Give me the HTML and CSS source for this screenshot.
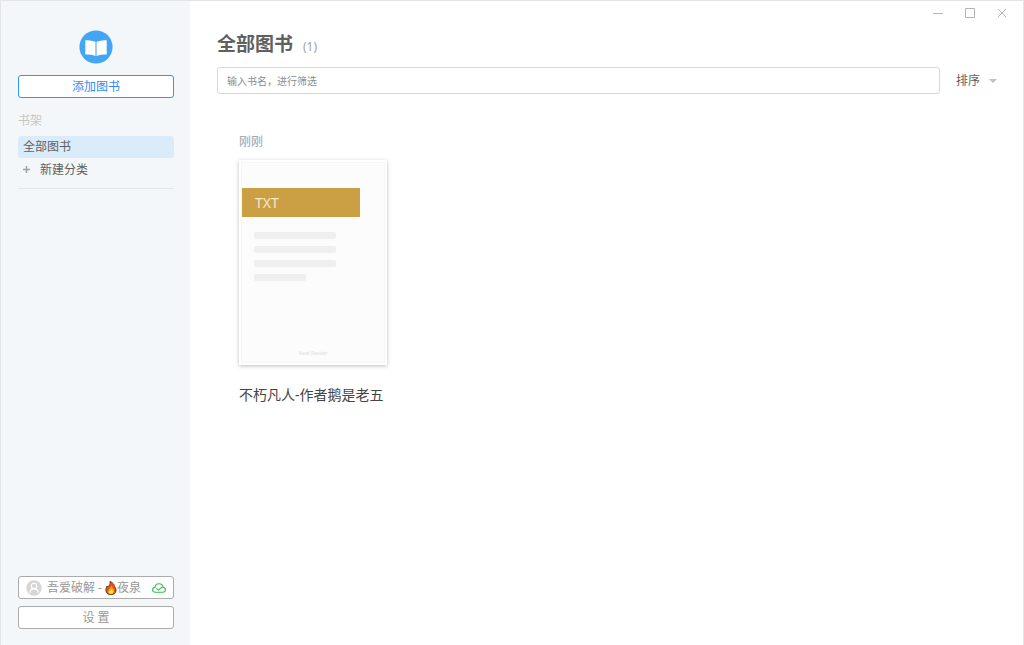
FILE: index.html
```html
<!DOCTYPE html>
<html lang="zh-CN">
<head>
<meta charset="utf-8">
<title>全部图书</title>
<link rel="stylesheet" href="styles.css">
</head>
<body>
<div class="app">
  <aside class="sidebar">
    <svg class="logo" viewBox="0 0 34 34" aria-hidden="true">
      <circle cx="17" cy="17" r="16.6" fill="#42a5f5"/>
      <path d="M6.3 10.2Q12 9.8 16.4 11.8V26Q12 24.2 6.3 24.6ZM27.7 10.2Q22 9.8 17.6 11.8V26Q22 24.2 27.7 24.6Z" fill="#fff"/>
      <path d="M17 11.8V26" stroke="#a9d5fa" stroke-width="1"/>
    </svg>
    <button class="btn btn-primary" type="button">添加图书</button>
    <h2 class="shelf-title">书架</h2>
    <nav class="shelf">
      <a class="shelf-item active" href="#all">全部图书</a>
      <button class="shelf-item shelf-new" type="button">
        <svg class="plus" viewBox="0 0 7 7" aria-hidden="true"><path d="M3.5 0V7M0 3.5H7" stroke="#a0a2a3" stroke-width="1.5"/></svg>
        新建分类
      </button>
    </nav>
    <div class="sidebar-bottom">
      <button class="btn account" type="button">
        <svg class="avatar" viewBox="0 0 16 16" aria-hidden="true">
          <circle cx="8" cy="8" r="7.7" fill="#d6d6d6"/>
          <g fill="none" stroke="#fff" stroke-width="1.2"><circle cx="8" cy="6" r="2.7"/><path d="M3.6 12.8C4 10.2 5.5 8.9 8 8.9S12 10.2 12.4 12.8"/></g>
        </svg>
        <span class="account-name">吾爱破解 - <svg class="flame" viewBox="0 0 12 14" aria-hidden="true">
          <path d="M5 .4C8.4 1.6 9.2 3.8 9.8 5.8 10.8 7.2 11.3 8.5 11 10 10.4 12.5 8.6 13.7 6 13.7S1.3 12.3.9 9.8C.6 7.8 1.3 6.6 2 5L2.8 6C4.4 4.4 5.6 2.8 5 .4Z" fill="#e65312" stroke="#542817" stroke-width=".8"/>
          <path d="M6 4.6C7 6.6 9.4 7.8 9.1 10.3 8.9 12.2 7.7 13 6 13S3 12 2.9 10.2L3.7 8.4C5 7.8 6 6.6 6 4.6Z" fill="#ff9d18"/>
          <path d="M6.2 8.2L7.1 9.8 8.2 9.4Q8.4 12.7 6 12.7T3.8 9.8L5 10.3Z" fill="#fff04a"/>
        </svg>夜泉</span>
        <svg class="cloud" viewBox="0 0 14 10" aria-hidden="true"><path d="M3.3 9.2C1.5 9.2.6 8.1.6 6.8.6 5.4 1.6 4.6 2.9 4.4 3.2 2.1 4.9.7 7 .7S10.8 2.1 11.1 4.3C12.5 4.5 13.4 5.5 13.4 6.8 13.4 8.2 12.4 9.2 10.8 9.2ZM4.4 5.3L6.5 7.1 10.6 3.8" fill="none" stroke="#32bd50" stroke-width="1.1"/></svg>
      </button>
      <button class="btn settings" type="button">设 置</button>
    </div>
  </aside>
  <main class="main">
    <div class="window-bar">
      <button class="win" type="button" aria-label="最小化"><svg viewBox="0 0 10 10"><path d="M0 5.5H10"/></svg></button>
      <button class="win" type="button" aria-label="最大化"><svg viewBox="0 0 10 10"><path d="M.5.5H9.5V9.5H.5Z"/></svg></button>
      <button class="win" type="button" aria-label="关闭"><svg viewBox="0 0 10 10"><path d="M1 1L9 9M9 1L1 9"/></svg></button>
    </div>
    <header class="heading">
      <h1 class="title">全部图书</h1>
      <span class="count">(1)</span>
    </header>
    <div class="toolbar">
      <input class="search" type="text" aria-label="筛选书名" placeholder="输入书名，进行筛选">
      <button class="sort" type="button">排序
        <svg class="caret" viewBox="0 0 8 4" aria-hidden="true"><path d="M0 0H8L4 4Z" fill="#c0c0c0"/></svg>
      </button>
    </div>
    <section class="books">
      <h2 class="group-title">刚刚</h2>
      <article class="book">
        <div class="cover">
          <div class="page">
            <div class="format">TXT</div>
            <div class="lines">
              <div class="line"></div>
              <div class="line"></div>
              <div class="line"></div>
              <div class="line short"></div>
            </div>
            <div class="brand">Neat Reader</div>
          </div>
        </div>
        <h3 class="book-title">不朽凡人-作者鹅是老五</h3>
      </article>
    </section>
  </main>
</div>
</body>
</html>
```
FILE: styles.css
```css
* { box-sizing: border-box; }

body {
  margin: 0;
  background: #fff;
  color: #606060;
  font: 12px/16px "Noto Sans", "Noto Sans CJK SC", sans-serif;
}

h1, h2, h3 { margin: 0; font-weight: 400; }
button, input { font: inherit; color: inherit; }
button { border: 0; padding: 0; background: none; cursor: pointer; }
svg { display: block; flex: none; }

.app {
  display: flex;
  min-height: 100vh;
  border: 1px solid #e4e5e6;
  border-bottom: 0;
}

.sidebar {
  display: flex;
  flex-direction: column;
  flex: none;
  width: 189px;
  padding: 29px 16px 16px 17px;
  background: #f3f7fa;
}

.logo {
  align-self: center;
  width: 34px;
  height: 34px;
  margin-bottom: 11px;
}

.btn {
  display: flex;
  align-items: center;
  justify-content: center;
  width: 100%;
  height: 23px;
  border: 1px solid #ababab;
  border-radius: 3px;
  background: #fff;
  color: #999;
}

.btn-primary { border-color: #2f96f5; color: #2f8df5; }

.shelf-title {
  margin: 15px 0 7px;
  color: #c4c6c7;
  font-size: 12px;
}

.shelf {
  padding-bottom: 7px;
  border-bottom: 1px solid #e3e6e8;
}

.shelf-item {
  display: flex;
  align-items: center;
  width: 100%;
  height: 23px;
  padding: 0 5px;
  border-radius: 3px;
  text-decoration: none;
  color: inherit;
}

.active { height: 22px; background: #daecfa; }
.shelf-new { gap: 10px; }

.plus { width: 7px; height: 7px; }

.sidebar-bottom {
  display: grid;
  gap: 7px;
  margin-top: auto;
}

.account { padding: 0 7px; gap: 5px; }
.avatar { width: 16px; height: 16px; }

.account-name {
  display: flex;
  align-items: center;
  flex: 1;
  white-space: pre;
}

.flame { width: 12px; height: 14px; }
.cloud { width: 14px; height: 10px; }

.main {
  flex: 1;
  min-width: 0;
  padding: 0 0 24px 27px;
}

.window-bar {
  display: flex;
  justify-content: flex-end;
  gap: 22px;
  padding: 7px 16px 0 0;
}

.win { width: 10px; height: 10px; }
.win svg { width: 10px; height: 10px; fill: none; stroke: #b4b4b4; }

.heading {
  display: flex;
  align-items: baseline;
  gap: 10px;
  margin-top: 12px;
}

.title {
  font-size: 19px;
  font-weight: 700;
  line-height: 28px;
}

.count { color: #a0a0a0; }

.toolbar {
  display: flex;
  align-items: center;
  gap: 16px;
  margin-top: 9px;
  padding-right: 26px;
}

.search {
  flex: 1;
  min-width: 0;
  height: 27px;
  padding: 0 9px;
  border: 1px solid #d8d8d8;
  border-radius: 3px;
  background: #fff;
  font-size: 10px;
}

.search::placeholder { color: #8c8c8c; opacity: 1; }

.sort {
  display: flex;
  align-items: center;
  gap: 9px;
}

.caret { width: 8px; height: 4px; }

.books { padding: 40px 22px 0; }

.group-title {
  margin-bottom: 10px;
  color: #a0a0a0;
  font-size: 12px;
}

.book { width: 148px; }

.cover {
  padding: 3px;
  background: #fff;
  box-shadow: 0 1px 4px rgba(0, 0, 0, .26);
}

.page {
  display: flex;
  flex-direction: column;
  height: 199px;
  padding-top: 25px;
  background: #fcfcfc;
  box-shadow: 0 0 0 1px #f6f6f6;
}

.format {
  width: 118px;
  padding-left: 13px;
  background: #cba045;
  color: #f4e8cf;
  font-size: 14px;
  line-height: 29px;
}

.lines {
  display: grid;
  gap: 7px;
  padding: 15px 0 0 12px;
}

.line {
  width: 82px;
  height: 7px;
  border-radius: 2px;
  background: #efefef;
}

.short { width: 52px; }

.brand {
  margin-top: auto;
  padding-bottom: 5px;
  color: #dedede;
  font-size: 5px;
  line-height: 8px;
  text-align: center;
}

.book-title {
  margin-top: 20px;
  color: #444;
  font-size: 14px;
  line-height: 20px;
  white-space: nowrap;
}
```
